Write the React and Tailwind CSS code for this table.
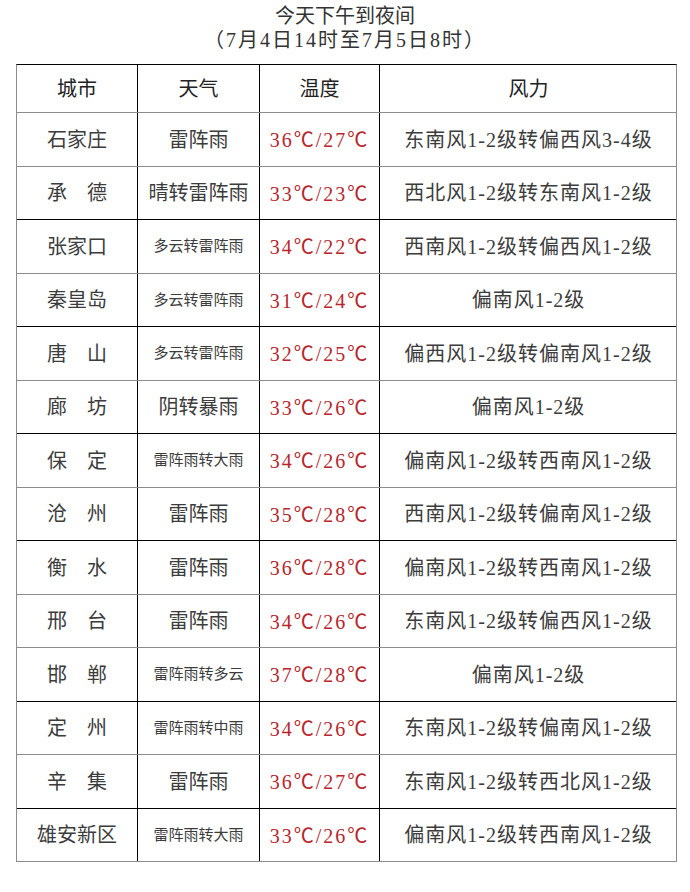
const rows = [
  { city: '石家庄', weather: '雷阵雨', small: false, temp: ['36', '27'], wind: '东南风1-2级转偏西风3-4级', dark: false },
  { city: '承　德', weather: '晴转雷阵雨', small: false, temp: ['33', '23'], wind: '西北风1-2级转东南风1-2级', dark: true },
  { city: '张家口', weather: '多云转雷阵雨', small: true, temp: ['34', '22'], wind: '西南风1-2级转偏西风1-2级', dark: false },
  { city: '秦皇岛', weather: '多云转雷阵雨', small: true, temp: ['31', '24'], wind: '偏南风1-2级', dark: true },
  { city: '唐　山', weather: '多云转雷阵雨', small: true, temp: ['32', '25'], wind: '偏西风1-2级转偏南风1-2级', dark: false },
  { city: '廊　坊', weather: '阴转暴雨', small: false, temp: ['33', '26'], wind: '偏南风1-2级', dark: true },
  { city: '保　定', weather: '雷阵雨转大雨', small: true, temp: ['34', '26'], wind: '偏南风1-2级转西南风1-2级', dark: false },
  { city: '沧　州', weather: '雷阵雨', small: false, temp: ['35', '28'], wind: '西南风1-2级转偏南风1-2级', dark: true },
  { city: '衡　水', weather: '雷阵雨', small: false, temp: ['36', '28'], wind: '偏南风1-2级转西南风1-2级', dark: false },
  { city: '邢　台', weather: '雷阵雨', small: false, temp: ['34', '26'], wind: '东南风1-2级转偏西风1-2级', dark: false },
  { city: '邯　郸', weather: '雷阵雨转多云', small: true, temp: ['37', '28'], wind: '偏南风1-2级', dark: true },
  { city: '定　州', weather: '雷阵雨转中雨', small: true, temp: ['34', '26'], wind: '东南风1-2级转偏南风1-2级', dark: false },
  { city: '辛　集', weather: '雷阵雨', small: false, temp: ['36', '27'], wind: '东南风1-2级转西北风1-2级', dark: true },
  { city: '雄安新区', weather: '雷阵雨转大雨', small: true, temp: ['33', '26'], wind: '偏南风1-2级转西南风1-2级', dark: false },
];

const font = { fontFamily: '"Liberation Serif", "Noto Sans CJK SC", serif' };
const cjk = { fontFamily: '"Noto Sans CJK SC", sans-serif' };

// ℃ as the full-width CJK glyph, like the source
const Temp = ({ hi, lo }) => (
  <span className="tracking-[2px]">
    {hi}
    <span style={cjk}>℃</span>/{lo}
    <span style={cjk}>℃</span>
  </span>
);

const Row = ({ r, i }) => (
  <div
    className={`grid grid-cols-[121px_122px_120px_297px] border-b ${r.dark ? 'border-black' : 'border-[#8c8c8c]'} ${i % 2 === 0 ? 'h-[54px]' : 'h-[53px]'}`}
  >
    <div className="flex items-center justify-center border-r border-black text-[20px] text-[#3c3c3c]">{r.city}</div>
    <div
      className={`flex items-center justify-center border-r border-black text-[#3c3c3c] ${r.small ? 'text-[15px]' : 'text-[20px]'}`}
    >
      {r.weather}
    </div>
    <div className="flex items-center justify-center border-r border-black text-[20px] text-[#b8262c]">
      <Temp hi={r.temp[0]} lo={r.temp[1]} />
    </div>
    <div className="flex items-center justify-center text-[20px] tracking-[1px] text-[#3c3c3c]">{r.wind}</div>
  </div>
);

export default function App() {
  return (
    <div className="w-[690px] h-[892px] bg-white" style={font}>
      <div className="pt-1 text-center text-[20px] leading-6 text-[#333]">
        <div>今天下午到夜间</div>
        <div className="tracking-[2px]">（7月4日14时至7月5日8时）</div>
      </div>
      <div className="mt-3 ml-4 w-[661px] border-t border-black border-x border-x-[#8c8c8c]">
        <div className="grid grid-cols-[121px_122px_120px_297px] h-[48px] border-b border-[#8c8c8c] text-[20px] text-[#222]">
          <div className="flex items-center justify-center border-r border-black">城市</div>
          <div className="flex items-center justify-center border-r border-black">天气</div>
          <div className="flex items-center justify-center border-r border-black">温度</div>
          <div className="flex items-center justify-center">风力</div>
        </div>
        {rows.map((r, i) => (
          <Row key={i} r={r} i={i} />
        ))}
      </div>
    </div>
  );
}
